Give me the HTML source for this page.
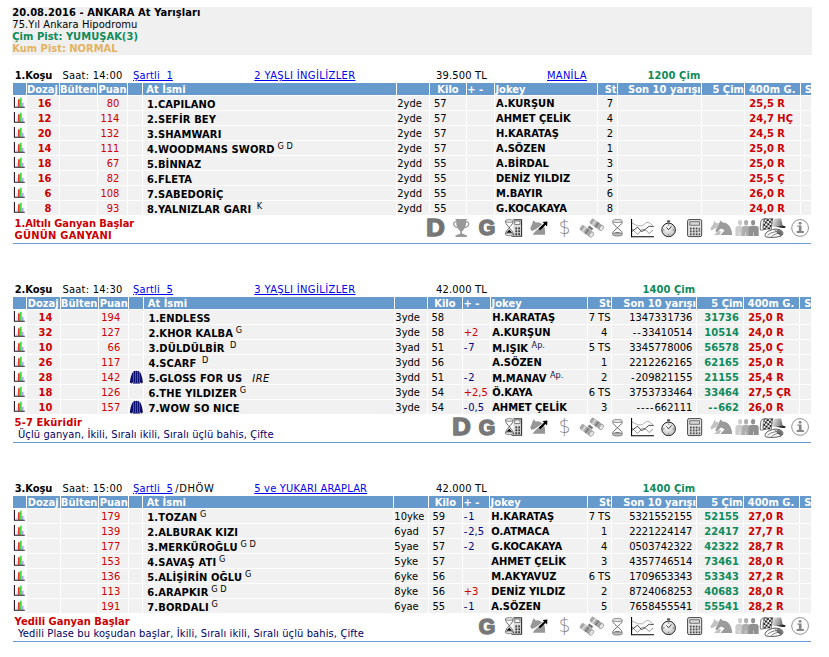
<!DOCTYPE html>
<html lang="tr"><head><meta charset="utf-8"><title>20.08.2016 - ANKARA At Yarışları</title>
<style>
html,body{margin:0;padding:0;background:#fff;overflow:hidden;width:829px;height:657px}
#page{position:absolute;left:0;top:0;width:829px;height:657px;
 font-family:"DejaVu Sans","Liberation Sans",sans-serif;font-size:9.95px;color:#000;overflow:hidden}
#hdr{position:absolute;left:12.1px;top:6.9px;width:799.9px;height:47.8px;background:#f0f0f0;line-height:11.95px;white-space:nowrap}
#hdr div{padding-left:0.2px}
.b{font-weight:bold !important}
.grn{color:#0f8a5a}
.org{color:#e3b45f}
.race{position:absolute;left:0;width:829px}
#mask{position:absolute;left:810.9px;top:60px;width:19px;height:597px;background:#fff}
.ttl{position:absolute;left:0;top:0.1px;height:12px;line-height:12px;white-space:nowrap}
.ttl span,.ttl a{position:absolute;top:0}
a{color:#0000ee;text-decoration:underline}
table.r{position:absolute;border-collapse:separate;border-spacing:0;table-layout:fixed}
table.r td,table.r th{padding:0;margin:0;white-space:nowrap;text-align:left;font-weight:normal;box-sizing:border-box;
 border-right:1.25px solid #fff;border-bottom:1.25px solid #fff}
table.r th{background:#6699cc;color:#fff;font-weight:bold;height:13.25px;line-height:11px;padding-top:1px;vertical-align:top}
table.r td{background:#f1f1f1;height:15px;line-height:11.75px;padding-top:2px;vertical-align:top}
table.r td.ic{background:#fafafa}
.cl{clip-path:inset(-40px 0 -40px 0);white-space:nowrap}
.hy{letter-spacing:0.9px}
.red{color:#cc0000}
.nav{color:#000080}
.ra{text-align:right !important}
.ca{text-align:center !important}
sup{font-size:8.2px;font-weight:normal;vertical-align:baseline;position:relative;top:-3.4px;line-height:0}
.ft{position:absolute;left:14.6px;white-space:nowrap;line-height:11.95px}
.ft .n{color:#000066;padding-left:3.4px}
.hr{position:absolute;left:13.1px;height:0.9px;width:797.8px;background:#6b9bd1}
.ico{position:absolute}
svg{display:block;overflow:visible}
</style></head>
<body><div id="page">
<svg width="0" height="0" style="position:absolute" aria-hidden="true"><defs><linearGradient id="dg" x1="0" y1="0" x2="1" y2="0"><stop offset="0" stop-color="#828282"/><stop offset="1" stop-color="#6c6c6c"/></linearGradient><radialGradient id="wg" cx="0.4" cy="0.35" r="0.75"><stop offset="0" stop-color="#fff"/><stop offset="1" stop-color="#b8b8b8"/></radialGradient><pattern id="ck" width="4.2" height="4.2" patternUnits="userSpaceOnUse" patternTransform="rotate(-8)"><rect width="4.2" height="4.2" fill="#fff"/><rect width="2.1" height="2.1" fill="#1a1a1a"/><rect x="2.1" y="2.1" width="2.1" height="2.1" fill="#1a1a1a"/></pattern><linearGradient id="ht" x1="0" y1="0" x2="1" y2="0.3"><stop offset="0" stop-color="#e2e2e2"/><stop offset="0.55" stop-color="#a0a0a0"/><stop offset="1" stop-color="#555"/></linearGradient></defs></svg>
<div id="hdr"><div class="b"><span style="letter-spacing:0.08px">20.08.2016 - ANKARA At Yarışları</span></div><div><span style="letter-spacing:0.07px">75.Yıl Ankara Hipodromu</span></div><div class="b grn"><span style="letter-spacing:0.03px">Çim Pist: YUMUŞAK(3)</span></div><div class="b org"><span style="letter-spacing:-0.02px">Kum Pist: NORMAL</span></div></div>
<div class="race" style="top:69.85px;height:178.2px"><div class="ttl"><span class="b" style="left:14.7px;letter-spacing:-0.08px">1.Koşu</span><span style="left:62.4px;letter-spacing:0.24px">Saat: 14:00</span><a style="left:133px;letter-spacing:0.15px">Şartli&nbsp; 1</a><a style="left:254.3px;letter-spacing:0.37px">2 YAŞLI İNGİLİZLER</a><span style="left:435.9px;letter-spacing:0.18px">39.500 TL</span><a style="left:547px;letter-spacing:0.26px">MANİLA</a><span class="b grn" style="left:647.6px;letter-spacing:0.07px">1200 Çim</span></div><table class="r" style="left:13.07px;top:13px;width:817.5px"><colgroup><col style="width:13.65px"><col style="width:33px"><col style="width:38.4px"><col style="width:30.15px"><col style="width:14.35px"><col style="width:254.15px"><col style="width:33.3px"><col style="width:36.9px"><col style="width:28.2px"><col style="width:103px"><col style="width:19.8px"><col style="width:84.1px"><col style="width:43.2px"><col style="width:55.7px"><col style="width:29.6px"></colgroup><tr><th style="padding-left:0.3px"></th><th style="padding-left:0.3px"><div class="cl">Dozaj</div></th><th style="padding-left:0.3px">Bülten</th><th style="padding-left:0.3px">Puan</th><th style="padding-left:0.3px"></th><th style="padding-left:0.3px">&nbsp;At İsmi</th><th style="padding-left:0.3px"></th><th class="ca">Kilo</th><th style="padding-left:0.3px">+ -</th><th style="padding-left:0.3px">Jokey</th><th class="ra" style="padding-right:0.3px"><div class="cl">St</div></th><th class="ra" style="padding-right:0.3px"><div class="cl">Son 10 yarışı</div></th><th class="ra" style="padding-right:0.3px"><div class="cl">5 Çim</div></th><th style="padding-left:0.3px">&nbsp;400m G.</th><th style="padding-left:0.3px">&nbsp;S</th></tr><tr><td class="ic" style="padding-top:0"><svg width="12.5" height="13.6" viewBox="0 0 12.5 13.6"><rect x="3.4" y="7.2" width="1.6" height="3.7" fill="#cfe2fb"/><rect x="5.0" y="3.3" width="1.8" height="7.6" fill="#ee3535"/><rect x="6.9" y="1.8" width="1.8" height="9.1" fill="#3bdc3b"/><rect x="8.8" y="6.9" width="1.7" height="4" fill="#a3a3f6"/><path d="M1.45 1.1V11.3H11.8" fill="none" stroke="#2a1822" stroke-width="1.1"/></svg></td><td class="b red ra" style="padding-right:7.2px">16</td><td></td><td class="red ra" style="padding-right:7.9px">80</td><td style="padding-top:0"></td><td class="b" style="padding-left:0.8px;padding-top:2.6px;line-height:11px;letter-spacing:0.12px">&nbsp;1.CAPILANO</td><td style="padding-left:0.5px">2yde</td><td style="padding-left:0.7px">&nbsp;57</td><td style="padding-left:0.6px"></td><td class="b" style="padding-left:0.9px">A.KURŞUN</td><td class="ra" style="padding-right:0.6px">7&nbsp;</td><td class="ra" style="padding-right:0.6px"></td><td class="b grn ra" style="padding-right:0.6px"></td><td class="b red" style="padding-left:0.7px">&nbsp;25,5 R</td><td></td></tr><tr><td class="ic" style="padding-top:0"><svg width="12.5" height="13.6" viewBox="0 0 12.5 13.6"><rect x="3.4" y="7.2" width="1.6" height="3.7" fill="#cfe2fb"/><rect x="5.0" y="3.3" width="1.8" height="7.6" fill="#ee3535"/><rect x="6.9" y="1.8" width="1.8" height="9.1" fill="#3bdc3b"/><rect x="8.8" y="6.9" width="1.7" height="4" fill="#a3a3f6"/><path d="M1.45 1.1V11.3H11.8" fill="none" stroke="#2a1822" stroke-width="1.1"/></svg></td><td class="b red ra" style="padding-right:7.2px">12</td><td></td><td class="red ra" style="padding-right:7.9px">114</td><td style="padding-top:0"></td><td class="b" style="padding-left:0.8px;padding-top:2.6px;line-height:11px;letter-spacing:0.12px">&nbsp;2.SEFİR BEY</td><td style="padding-left:0.5px">2yde</td><td style="padding-left:0.7px">&nbsp;57</td><td style="padding-left:0.6px"></td><td class="b" style="padding-left:0.9px">AHMET ÇELİK</td><td class="ra" style="padding-right:0.6px">4&nbsp;</td><td class="ra" style="padding-right:0.6px"></td><td class="b grn ra" style="padding-right:0.6px"></td><td class="b red" style="padding-left:0.7px">&nbsp;24,7 HÇ</td><td></td></tr><tr><td class="ic" style="padding-top:0"><svg width="12.5" height="13.6" viewBox="0 0 12.5 13.6"><rect x="3.4" y="7.2" width="1.6" height="3.7" fill="#cfe2fb"/><rect x="5.0" y="3.3" width="1.8" height="7.6" fill="#ee3535"/><rect x="6.9" y="1.8" width="1.8" height="9.1" fill="#3bdc3b"/><rect x="8.8" y="6.9" width="1.7" height="4" fill="#a3a3f6"/><path d="M1.45 1.1V11.3H11.8" fill="none" stroke="#2a1822" stroke-width="1.1"/></svg></td><td class="b red ra" style="padding-right:7.2px">20</td><td></td><td class="red ra" style="padding-right:7.9px">132</td><td style="padding-top:0"></td><td class="b" style="padding-left:0.8px;padding-top:2.6px;line-height:11px;letter-spacing:0.12px">&nbsp;3.SHAMWARI</td><td style="padding-left:0.5px">2yde</td><td style="padding-left:0.7px">&nbsp;57</td><td style="padding-left:0.6px"></td><td class="b" style="padding-left:0.9px">H.KARATAŞ</td><td class="ra" style="padding-right:0.6px">2&nbsp;</td><td class="ra" style="padding-right:0.6px"></td><td class="b grn ra" style="padding-right:0.6px"></td><td class="b red" style="padding-left:0.7px">&nbsp;24,5 R</td><td></td></tr><tr><td class="ic" style="padding-top:0"><svg width="12.5" height="13.6" viewBox="0 0 12.5 13.6"><rect x="3.4" y="7.2" width="1.6" height="3.7" fill="#cfe2fb"/><rect x="5.0" y="3.3" width="1.8" height="7.6" fill="#ee3535"/><rect x="6.9" y="1.8" width="1.8" height="9.1" fill="#3bdc3b"/><rect x="8.8" y="6.9" width="1.7" height="4" fill="#a3a3f6"/><path d="M1.45 1.1V11.3H11.8" fill="none" stroke="#2a1822" stroke-width="1.1"/></svg></td><td class="b red ra" style="padding-right:7.2px">14</td><td></td><td class="red ra" style="padding-right:7.9px">111</td><td style="padding-top:0"></td><td class="b" style="padding-left:0.8px;padding-top:2.6px;line-height:11px;letter-spacing:0.12px">&nbsp;4.WOODMANS SWORD<sup>&nbsp;G D</sup></td><td style="padding-left:0.5px">2yde</td><td style="padding-left:0.7px">&nbsp;57</td><td style="padding-left:0.6px"></td><td class="b" style="padding-left:0.9px">A.SÖZEN</td><td class="ra" style="padding-right:0.6px">1&nbsp;</td><td class="ra" style="padding-right:0.6px"></td><td class="b grn ra" style="padding-right:0.6px"></td><td class="b red" style="padding-left:0.7px">&nbsp;25,0 R</td><td></td></tr><tr><td class="ic" style="padding-top:0"><svg width="12.5" height="13.6" viewBox="0 0 12.5 13.6"><rect x="3.4" y="7.2" width="1.6" height="3.7" fill="#cfe2fb"/><rect x="5.0" y="3.3" width="1.8" height="7.6" fill="#ee3535"/><rect x="6.9" y="1.8" width="1.8" height="9.1" fill="#3bdc3b"/><rect x="8.8" y="6.9" width="1.7" height="4" fill="#a3a3f6"/><path d="M1.45 1.1V11.3H11.8" fill="none" stroke="#2a1822" stroke-width="1.1"/></svg></td><td class="b red ra" style="padding-right:7.2px">18</td><td></td><td class="red ra" style="padding-right:7.9px">67</td><td style="padding-top:0"></td><td class="b" style="padding-left:0.8px;padding-top:2.6px;line-height:11px;letter-spacing:0.12px">&nbsp;5.BİNNAZ</td><td style="padding-left:0.5px">2ydd</td><td style="padding-left:0.7px">&nbsp;55</td><td style="padding-left:0.6px"></td><td class="b" style="padding-left:0.9px">A.BİRDAL</td><td class="ra" style="padding-right:0.6px">3&nbsp;</td><td class="ra" style="padding-right:0.6px"></td><td class="b grn ra" style="padding-right:0.6px"></td><td class="b red" style="padding-left:0.7px">&nbsp;25,0 R</td><td></td></tr><tr><td class="ic" style="padding-top:0"><svg width="12.5" height="13.6" viewBox="0 0 12.5 13.6"><rect x="3.4" y="7.2" width="1.6" height="3.7" fill="#cfe2fb"/><rect x="5.0" y="3.3" width="1.8" height="7.6" fill="#ee3535"/><rect x="6.9" y="1.8" width="1.8" height="9.1" fill="#3bdc3b"/><rect x="8.8" y="6.9" width="1.7" height="4" fill="#a3a3f6"/><path d="M1.45 1.1V11.3H11.8" fill="none" stroke="#2a1822" stroke-width="1.1"/></svg></td><td class="b red ra" style="padding-right:7.2px">16</td><td></td><td class="red ra" style="padding-right:7.9px">82</td><td style="padding-top:0"></td><td class="b" style="padding-left:0.8px;padding-top:2.6px;line-height:11px;letter-spacing:0.12px">&nbsp;6.FLETA</td><td style="padding-left:0.5px">2ydd</td><td style="padding-left:0.7px">&nbsp;55</td><td style="padding-left:0.6px"></td><td class="b" style="padding-left:0.9px">DENİZ YILDIZ</td><td class="ra" style="padding-right:0.6px">5&nbsp;</td><td class="ra" style="padding-right:0.6px"></td><td class="b grn ra" style="padding-right:0.6px"></td><td class="b red" style="padding-left:0.7px">&nbsp;25,5 Ç</td><td></td></tr><tr><td class="ic" style="padding-top:0"><svg width="12.5" height="13.6" viewBox="0 0 12.5 13.6"><rect x="3.4" y="7.2" width="1.6" height="3.7" fill="#cfe2fb"/><rect x="5.0" y="3.3" width="1.8" height="7.6" fill="#ee3535"/><rect x="6.9" y="1.8" width="1.8" height="9.1" fill="#3bdc3b"/><rect x="8.8" y="6.9" width="1.7" height="4" fill="#a3a3f6"/><path d="M1.45 1.1V11.3H11.8" fill="none" stroke="#2a1822" stroke-width="1.1"/></svg></td><td class="b red ra" style="padding-right:7.2px">6</td><td></td><td class="red ra" style="padding-right:7.9px">108</td><td style="padding-top:0"></td><td class="b" style="padding-left:0.8px;padding-top:2.6px;line-height:11px;letter-spacing:0.12px">&nbsp;7.SABEDORİÇ</td><td style="padding-left:0.5px">2ydd</td><td style="padding-left:0.7px">&nbsp;55</td><td style="padding-left:0.6px"></td><td class="b" style="padding-left:0.9px">M.BAYIR</td><td class="ra" style="padding-right:0.6px">6&nbsp;</td><td class="ra" style="padding-right:0.6px"></td><td class="b grn ra" style="padding-right:0.6px"></td><td class="b red" style="padding-left:0.7px">&nbsp;26,0 R</td><td></td></tr><tr><td class="ic" style="padding-top:0"><svg width="12.5" height="13.6" viewBox="0 0 12.5 13.6"><rect x="3.4" y="7.2" width="1.6" height="3.7" fill="#cfe2fb"/><rect x="5.0" y="3.3" width="1.8" height="7.6" fill="#ee3535"/><rect x="6.9" y="1.8" width="1.8" height="9.1" fill="#3bdc3b"/><rect x="8.8" y="6.9" width="1.7" height="4" fill="#a3a3f6"/><path d="M1.45 1.1V11.3H11.8" fill="none" stroke="#2a1822" stroke-width="1.1"/></svg></td><td class="b red ra" style="padding-right:7.2px">8</td><td></td><td class="red ra" style="padding-right:7.9px">93</td><td style="padding-top:0"></td><td class="b" style="padding-left:0.8px;padding-top:2.6px;line-height:11px;letter-spacing:0.12px">&nbsp;8.YALNIZLAR GARI<sup>&nbsp;&nbsp;K</sup></td><td style="padding-left:0.5px">2ydd</td><td style="padding-left:0.7px">&nbsp;55</td><td style="padding-left:0.6px"></td><td class="b" style="padding-left:0.9px">G.KOCAKAYA</td><td class="ra" style="padding-right:0.6px">8&nbsp;</td><td class="ra" style="padding-right:0.6px"></td><td class="b grn ra" style="padding-right:0.6px"></td><td class="b red" style="padding-left:0.7px">&nbsp;24,0 R</td><td></td></tr></table><div class="ft b red" style="top:148.25px"><span style="letter-spacing:-0.07px">1.Altılı Ganyan Başlar</span></div><div class="ft b red" style="top:160.2px"><span style="letter-spacing:0.22px">GÜNÜN GANYANI</span></div><div class="ico" style="left:427px;top:149.35px"><svg width="18" height="18" viewBox="0 0 18 18"><text transform="translate(-0.65 17.2) scale(1.11 1)" x="0" y="0" font-family="Liberation Sans, sans-serif" font-weight="bold" font-size="23.1" fill="url(#dg)" stroke="#777" stroke-width="1.5" stroke-linejoin="round">D</text></svg></div><div class="ico" style="left:452.9px;top:149.35px"><svg width="16.4" height="18" viewBox="0 0 16.4 18"><path d="M2.4 0H14V1.1H13.3C13.3 4 13 6 12.4 7.4C11.6 9.4 10.4 10.8 9 12.6V14.6L11.6 15.6L13.9 16.6V18H2.5V16.6L4.8 15.6L7.4 14.6V12.6C6 10.8 4.8 9.4 4 7.4C3.4 6 3.1 4 3.1 1.1H2.4Z" fill="#999"/><path d="M3.3 2.9C0.4 2.4 0 5.2 1.3 6.8C2.1 7.8 3.4 8.4 4.8 8.6M13.1 2.9C16 2.4 16.4 5.2 15.1 6.8C14.3 7.8 13 8.4 11.6 8.6" fill="none" stroke="#999" stroke-width="1.3"/></svg></div><div class="ico" style="left:478.5px;top:149.65px"><svg width="16.2" height="16.8" viewBox="0 0 16.2 16.8"><text x="-0.35" y="15.85" font-family="Liberation Sans, sans-serif" font-weight="bold" font-size="21.2" fill="#787878" stroke="#787878" stroke-width="1.6" stroke-linejoin="round" stroke-linecap="round">G</text></svg></div><div class="ico" style="left:504.8px;top:149.15px"><svg width="17.2" height="18" viewBox="0 0 17.2 18"><rect x="8.4" y="0.6" width="8.2" height="16.6" fill="#dcdcdc"/><path d="M8.4 0.7H16.6V17.2H6.5" fill="none" stroke="#333" stroke-width="1.1"/><rect x="9.8" y="2" width="5.2" height="3.6" fill="#f2f2f2" stroke="#555" stroke-width="0.7"/><g fill="#3a3a3a"><rect x="10.4" y="8.4" width="1.8" height="2"/><rect x="13.3" y="8.4" width="1.8" height="2"/><rect x="10.4" y="11.3" width="1.8" height="2"/><rect x="13.3" y="11.3" width="1.8" height="2"/><rect x="10.4" y="14.2" width="1.8" height="2"/><rect x="13.3" y="14.2" width="1.8" height="2"/><rect x="7.8" y="14.8" width="1.4" height="1.4"/></g><path d="M0.5 2C0.5 5.5 3.4 7 4.3 8.7C5.2 7 8.1 5.5 8.1 2ZM0.5 15.2C0.5 12 3.4 10.4 4.3 8.7C5.2 10.4 8.1 12 8.1 15.2Z" fill="#fff" stroke="#444" stroke-width="0.8"/><ellipse cx="4.3" cy="2" rx="3.9" ry="1.4" fill="#e8e8e8" stroke="#666" stroke-width="0.7"/><ellipse cx="4.3" cy="15.3" rx="3.9" ry="1.4" fill="#ddd" stroke="#666" stroke-width="0.7"/><path d="M1.4 13.7L4.3 10.5L7.2 13.7Z" fill="#111"/></svg></div><div class="ico" style="left:529.9px;top:150.35px"><svg width="17.4" height="14.8" viewBox="0 0 17.4 14.8"><path d="M3.4 0.2L5.8 2.6L8.6 2.2L12.4 4.2L9.6 6.5L5 9.7L1.7 11L0.2 8.6L1.9 4.4Z" fill="#979797"/><path d="M12.9 4.9L14.6 7.6C15 10 15.2 12.4 15.1 14.8H2.8L3.6 13.2L6.2 10.4L10.2 7.3Z" fill="#979797"/><path d="M9.4 9.4L15.8 3.2" stroke="#000" stroke-width="2.1" fill="none"/><path d="M12.6 1.9L17.4 1.6L17.1 6.6Z" fill="#000"/></svg></div><div class="ico" style="left:559.8px;top:150.35px"><svg width="9.2" height="17" viewBox="0 0 9.2 17"><text x="-1.5" y="14.3" font-family="DejaVu Sans Light, DejaVu Sans, sans-serif" font-weight="200" font-size="18.8" fill="#8c8c8c">$</text></svg></div><div class="ico" style="left:579.8px;top:149.15px"><svg width="23.2" height="18.4" viewBox="0 0 23.2 18.4"><g transform="rotate(36 6.6 12.1)"><rect x="-0.6" y="9.1" width="14.4" height="6" rx="1.6" fill="#a6a6a6"/><rect x="2.4" y="9.1" width="2.2" height="6" fill="#d4d4d4"/><rect x="6.4" y="9.1" width="1.6" height="6" fill="#7a7a7a"/><ellipse cx="12.6" cy="12.1" rx="1.9" ry="2.9" fill="#e4e4e4" stroke="#8a8a8a" stroke-width="0.6"/></g><g transform="rotate(36 16.6 5.6)"><rect x="9.4" y="2.7" width="14.4" height="5.8" rx="1.6" fill="#a6a6a6"/><rect x="12.4" y="2.7" width="2.2" height="5.8" fill="#d4d4d4"/><rect x="16.4" y="2.7" width="1.6" height="5.8" fill="#7a7a7a"/><ellipse cx="22.6" cy="5.6" rx="1.9" ry="2.8" fill="#e4e4e4" stroke="#8a8a8a" stroke-width="0.6"/></g><path d="M8.5 7.5L12.5 10.5" stroke="#777" stroke-width="2.6"/></svg></div><div class="ico" style="left:612.2px;top:149.65px"><svg width="10.9" height="17.4" viewBox="0 0 10.9 17.4"><path d="M0.6 2.2C0.6 6 4.5 7 5.45 8.7C6.4 7 10.3 6 10.3 2.2M0.6 15.2C0.6 11.4 4.5 10.4 5.45 8.7C6.4 10.4 10.3 11.4 10.3 15.2" fill="#fff" stroke="#4a4a4a" stroke-width="0.8"/><ellipse cx="5.45" cy="2" rx="4.9" ry="1.6" fill="#e6e6e6" stroke="#777" stroke-width="0.8"/><path d="M2 14.4C3.5 12.6 7.4 12.6 8.9 14.4Z" fill="#777"/><ellipse cx="5.45" cy="15.5" rx="4.9" ry="1.6" fill="#bdbdbd" stroke="#777" stroke-width="0.8"/></svg></div><div class="ico" style="left:631.2px;top:149.15px"><svg width="23" height="18.2" viewBox="0 0 23 18.2"><path d="M0.8 3.9L6.6 6.8L11.4 6.8L15.7 3.4L18.6 3.9L23 7.7" fill="none" stroke="#9a9a9a" stroke-width="0.8"/><path d="M0.8 9.7L6.6 15.4L11.4 10.1L15.3 11.6L18.1 14.5L22 11.1" fill="none" stroke="#777" stroke-width="0.8"/><path d="M0.8 12.5L6.6 8.2L10.4 12.5L12.8 11.6L18.1 7.2L22.5 7.7" fill="none" stroke="#222" stroke-width="0.8"/><path d="M0.55 0V17.7H23" fill="none" stroke="#000" stroke-width="1.1"/></svg></div><div class="ico" style="left:661px;top:150.15px"><svg width="15.2" height="17.2" viewBox="0 0 15.2 17.2"><rect x="6" y="0.2" width="3.2" height="2.4" rx="0.8" fill="#555"/><circle cx="7.6" cy="9.9" r="6.8" fill="url(#wg)" stroke="#222" stroke-width="1"/><path d="M7.6 4.4V5.8M7.6 14V15.4M2.1 9.9H3.5M11.7 9.9H13.1" stroke="#555" stroke-width="0.7"/><path d="M5.4 7.3L7.6 9.9L10.4 6.4" fill="none" stroke="#333" stroke-width="0.9"/></svg></div><div class="ico" style="left:687px;top:149.15px"><svg width="15.3" height="18.2" viewBox="0 0 15.3 18.2"><rect x="0.6" y="0.6" width="14.1" height="17" rx="1.6" fill="#e6e6e6" stroke="#444" stroke-width="1"/><rect x="2.8" y="2.8" width="9.8" height="3.4" fill="#dadada" stroke="#555" stroke-width="0.8"/><g fill="#4a4a4a"><rect x="2.9" y="8.6" width="1.8" height="1.9"/><rect x="5.8" y="8.6" width="1.8" height="1.9"/><rect x="8.7" y="8.6" width="1.8" height="1.9"/><rect x="2.9" y="11.5" width="1.8" height="1.9"/><rect x="5.8" y="11.5" width="1.8" height="1.9"/><rect x="8.7" y="11.5" width="1.8" height="1.9"/><rect x="2.9" y="14.4" width="1.8" height="1.9"/><rect x="5.8" y="14.4" width="1.8" height="1.9"/><rect x="8.7" y="14.4" width="1.8" height="1.9"/><rect x="11.6" y="14.4" width="1.6" height="1.9"/></g><rect x="11.6" y="8.6" width="1.6" height="4.6" fill="#777"/></svg></div><div class="ico" style="left:710px;top:150.15px"><svg width="22.2" height="15" viewBox="0 0 22.2 15"><path d="M10.4 0.4L12.6 2.6C17.2 2.4 22 7 22.2 15H10.5L14.6 10.2L11 8.4L6.6 12.4L5.3 11L8.6 4.4Z" fill="#9b9b9b"/><path d="M4.3 0.8L6 3L8.9 3.2L6.9 7.6L1.6 10.4L0.2 8.7L3 4.5Z" fill="#c2c2c2"/><path d="M3.9 15L8.6 10.8L11.2 11.6L9.6 15Z" fill="#c2c2c2"/></svg></div><div class="ico" style="left:735.4px;top:150.15px"><svg width="23.8" height="16.2" viewBox="0 0 23.8 16.2"><ellipse cx="5.1" cy="2.7" rx="2.1" ry="2.7" fill="#cdcdcd"/><path d="M0.4 16V8.8Q0.4 5.9 3 5.9H5.4Q8 5.9 8 8.8V16H4.45V12.5H3.95V16Z" fill="#cdcdcd"/><ellipse cx="11.1" cy="2.7" rx="2.1" ry="2.7" fill="#adadad"/><path d="M6.8 16V8.8Q6.8 5.9 9.4 5.9H12.2Q14.8 5.9 14.8 8.8V16H11.05V12.5H10.55V16Z" fill="#adadad"/><ellipse cx="18.1" cy="2.7" rx="2.1" ry="2.7" fill="#909090"/><path d="M13.4 16V8.8Q13.4 5.9 16 5.9H21.1Q23.7 5.9 23.7 8.8V16H18.8V12.5H18.3V16Z" fill="#909090"/></svg></div><div class="ico" style="left:760.2px;top:148.65px"><svg width="25.8" height="19.3" viewBox="0 0 25.8 19.3"><path d="M1.4 2.2C2.6 0.6 5 0.4 7 0.8C9 1.2 11 0.6 12.8 0.4L11.4 11C9.6 11.4 7.6 10.8 5.8 11.2C4.2 11.5 2.4 12.4 0.4 11.8C0.2 8 0.6 4.6 1.4 2.2Z" fill="url(#ck)" stroke="#444" stroke-width="0.6"/><path d="M1.4 2.2C2.2 1.2 3.4 1.4 3.8 2.4C3 5.4 2.8 8.6 3 11.4C2 12.2 0.8 12.2 0.4 11.8C0.2 8 0.6 4.6 1.4 2.2Z" fill="#fff" stroke="#555" stroke-width="0.6"/><path d="M13 8.6C13 5 13.4 2 14 0.7L21 0.4C21.8 2.6 22.3 5.2 22.5 7.6L25.6 8.6C25.4 9.6 24.6 10 23.6 10C20 9.4 16.5 9.2 13 8.6Z" fill="url(#ht)"/><path d="M16 8.3C19 8.7 22 8.5 22.5 7.6L25.7 8.7C25.3 9.8 24.5 10.1 23.6 10C21 9.6 18.4 9.3 16 8.3Z" fill="#2a2a2a"/><path d="M5.2 16.4C6 13.8 9.5 12.4 12.5 11.6C15 10.6 19.6 11 22 13.2C23.4 14.8 23.2 17 21 18C17 19.6 8.6 19.8 5.8 18.8C5 18.4 4.9 17.2 5.2 16.4Z" fill="#fff" stroke="#2a2a2a" stroke-width="0.8"/><path d="M16.6 11.6C19.6 11.4 21.8 12.8 22.5 14.6C22.9 16.4 22 17.8 20.4 18.3L16.8 14.6Z" fill="#777"/><path d="M7.6 17.4C10 14.8 13.6 14 16.4 13.6M11.4 18.6C14 16.2 17.4 15.2 20.6 15.2M14.4 11.8L17.6 14.6" fill="none" stroke="#444" stroke-width="0.7"/></svg></div><div class="ico" style="left:791px;top:149.15px"><svg width="18.2" height="17.9" viewBox="0 0 18.2 17.9"><circle cx="9.1" cy="8.95" r="8.4" fill="#fcfcfc" stroke="#868686" stroke-width="0.9"/><circle cx="9.1" cy="4.35" r="1.45" fill="#858585"/><path d="M6.4 6.4H10.5V12.1H12.9V13.9H5.7V12.1H7.9V7.8H6.4Z" fill="#858585"/></svg></div><div class="hr" style="top:172.8px"></div></div>
<div class="race" style="top:283.9px;height:163.2px"><div class="ttl"><span class="b" style="left:14.7px;letter-spacing:-0.08px">2.Koşu</span><span style="left:62.4px;letter-spacing:0.24px">Saat: 14:30</span><a style="left:133px;letter-spacing:0.15px">Şartli&nbsp; 5</a><a style="left:254.3px;letter-spacing:0.37px">3 YAŞLI İNGİLİZLER</a><span style="left:435.9px;letter-spacing:0.18px">42.000 TL</span><span class="b grn" style="left:642.5px;letter-spacing:0.07px">1400 Çim</span></div><table class="r" style="left:13.17px;top:13px;width:817.4px"><colgroup><col style="width:14.2px"><col style="width:33.2px"><col style="width:38.8px"><col style="width:29.8px"><col style="width:14.9px"><col style="width:250.8px"><col style="width:32.8px"><col style="width:35.5px"><col style="width:28.15px"><col style="width:96.75px"><col style="width:24.1px"><col style="width:85.1px"><col style="width:46.8px"><col style="width:56.4px"><col style="width:30.1px"></colgroup><tr><th style="padding-left:0.3px"></th><th style="padding-left:0.3px"><div class="cl">Dozaj</div></th><th style="padding-left:0.3px">Bülten</th><th style="padding-left:0.3px">Puan</th><th style="padding-left:0.3px"></th><th style="padding-left:0.3px">&nbsp;At İsmi</th><th style="padding-left:0.3px"></th><th class="ca">Kilo</th><th style="padding-left:0.3px">+ -</th><th style="padding-left:0.3px">Jokey</th><th class="ra" style="padding-right:0.3px"><div class="cl">St</div></th><th class="ra" style="padding-right:0.3px"><div class="cl">Son 10 yarışı</div></th><th class="ra" style="padding-right:0.3px"><div class="cl">5 Çim</div></th><th style="padding-left:0.3px">&nbsp;400m G.</th><th style="padding-left:0.3px">&nbsp;S</th></tr><tr><td class="ic" style="padding-top:0"><svg width="12.5" height="13.6" viewBox="0 0 12.5 13.6"><rect x="3.4" y="7.2" width="1.6" height="3.7" fill="#cfe2fb"/><rect x="5.0" y="3.3" width="1.8" height="7.6" fill="#ee3535"/><rect x="6.9" y="1.8" width="1.8" height="9.1" fill="#3bdc3b"/><rect x="8.8" y="6.9" width="1.7" height="4" fill="#a3a3f6"/><path d="M1.45 1.1V11.3H11.8" fill="none" stroke="#2a1822" stroke-width="1.1"/></svg></td><td class="b red ra" style="padding-right:7.2px">14</td><td></td><td class="red ra" style="padding-right:7.9px">194</td><td style="padding-top:0"></td><td class="b" style="padding-left:0.8px;padding-top:2.6px;line-height:11px;letter-spacing:0.12px">&nbsp;1.ENDLESS</td><td style="padding-left:0.5px">3yde</td><td style="padding-left:0.7px">&nbsp;58</td><td style="padding-left:0.6px"></td><td class="b" style="padding-left:0.9px">H.KARATAŞ</td><td class="ra" style="padding-right:0.6px">7 TS</td><td class="ra" style="padding-right:0.6px">1347331736&nbsp;</td><td class="b grn ra" style="padding-right:0.6px">31736&nbsp;</td><td class="b red" style="padding-left:0.7px">&nbsp;25,0 R</td><td></td></tr><tr><td class="ic" style="padding-top:0"><svg width="12.5" height="13.6" viewBox="0 0 12.5 13.6"><rect x="3.4" y="7.2" width="1.6" height="3.7" fill="#cfe2fb"/><rect x="5.0" y="3.3" width="1.8" height="7.6" fill="#ee3535"/><rect x="6.9" y="1.8" width="1.8" height="9.1" fill="#3bdc3b"/><rect x="8.8" y="6.9" width="1.7" height="4" fill="#a3a3f6"/><path d="M1.45 1.1V11.3H11.8" fill="none" stroke="#2a1822" stroke-width="1.1"/></svg></td><td class="b red ra" style="padding-right:7.2px">32</td><td></td><td class="red ra" style="padding-right:7.9px">127</td><td style="padding-top:0"></td><td class="b" style="padding-left:0.8px;padding-top:2.6px;line-height:11px;letter-spacing:0.12px">&nbsp;2.KHOR KALBA<sup>&nbsp;G</sup></td><td style="padding-left:0.5px">3yde</td><td style="padding-left:0.7px">&nbsp;58</td><td class="red" style="padding-left:0.6px">+2</td><td class="b" style="padding-left:0.9px">A.KURŞUN</td><td class="ra" style="padding-right:0.6px">4&nbsp;</td><td class="ra" style="padding-right:0.6px"><span class="hy">-</span><span class="hy">-</span>33410514&nbsp;</td><td class="b grn ra" style="padding-right:0.6px">10514&nbsp;</td><td class="b red" style="padding-left:0.7px">&nbsp;24,0 R</td><td></td></tr><tr><td class="ic" style="padding-top:0"><svg width="12.5" height="13.6" viewBox="0 0 12.5 13.6"><rect x="3.4" y="7.2" width="1.6" height="3.7" fill="#cfe2fb"/><rect x="5.0" y="3.3" width="1.8" height="7.6" fill="#ee3535"/><rect x="6.9" y="1.8" width="1.8" height="9.1" fill="#3bdc3b"/><rect x="8.8" y="6.9" width="1.7" height="4" fill="#a3a3f6"/><path d="M1.45 1.1V11.3H11.8" fill="none" stroke="#2a1822" stroke-width="1.1"/></svg></td><td class="b red ra" style="padding-right:7.2px">10</td><td></td><td class="red ra" style="padding-right:7.9px">66</td><td style="padding-top:0"></td><td class="b" style="padding-left:0.8px;padding-top:2.6px;line-height:11px;letter-spacing:0.12px">&nbsp;3.DÜLDÜLBİR<sup>&nbsp;&nbsp;D</sup></td><td style="padding-left:0.5px">3yad</td><td style="padding-left:0.7px">&nbsp;51</td><td class="nav" style="padding-left:0.6px"><span class="hy">-</span>7</td><td class="b" style="padding-left:0.9px;padding-top:2.6px;line-height:11px">M.IŞIK <sup style="color:#14144e">Ap.</sup></td><td class="ra" style="padding-right:0.6px">5 TS</td><td class="ra" style="padding-right:0.6px">3345778006&nbsp;</td><td class="b grn ra" style="padding-right:0.6px">56578&nbsp;</td><td class="b red" style="padding-left:0.7px">&nbsp;25,0 Ç</td><td></td></tr><tr><td class="ic" style="padding-top:0"><svg width="12.5" height="13.6" viewBox="0 0 12.5 13.6"><rect x="3.4" y="7.2" width="1.6" height="3.7" fill="#cfe2fb"/><rect x="5.0" y="3.3" width="1.8" height="7.6" fill="#ee3535"/><rect x="6.9" y="1.8" width="1.8" height="9.1" fill="#3bdc3b"/><rect x="8.8" y="6.9" width="1.7" height="4" fill="#a3a3f6"/><path d="M1.45 1.1V11.3H11.8" fill="none" stroke="#2a1822" stroke-width="1.1"/></svg></td><td class="b red ra" style="padding-right:7.2px">26</td><td></td><td class="red ra" style="padding-right:7.9px">117</td><td style="padding-top:0"></td><td class="b" style="padding-left:0.8px;padding-top:2.6px;line-height:11px;letter-spacing:0.12px">&nbsp;4.SCARF<sup>&nbsp;&nbsp;D</sup></td><td style="padding-left:0.5px">3ydd</td><td style="padding-left:0.7px">&nbsp;56</td><td style="padding-left:0.6px"></td><td class="b" style="padding-left:0.9px">A.SÖZEN</td><td class="ra" style="padding-right:0.6px">1&nbsp;</td><td class="ra" style="padding-right:0.6px">2212262165&nbsp;</td><td class="b grn ra" style="padding-right:0.6px">62165&nbsp;</td><td class="b red" style="padding-left:0.7px">&nbsp;25,0 R</td><td></td></tr><tr><td class="ic" style="padding-top:0"><svg width="12.5" height="13.6" viewBox="0 0 12.5 13.6"><rect x="3.4" y="7.2" width="1.6" height="3.7" fill="#cfe2fb"/><rect x="5.0" y="3.3" width="1.8" height="7.6" fill="#ee3535"/><rect x="6.9" y="1.8" width="1.8" height="9.1" fill="#3bdc3b"/><rect x="8.8" y="6.9" width="1.7" height="4" fill="#a3a3f6"/><path d="M1.45 1.1V11.3H11.8" fill="none" stroke="#2a1822" stroke-width="1.1"/></svg></td><td class="b red ra" style="padding-right:7.2px">28</td><td></td><td class="red ra" style="padding-right:7.9px">142</td><td style="padding-top:0"><svg width="13.9" height="13.6" viewBox="0 0 13.9 13.6"><path d="M5.4 0.8L6.3 1.3L7.25 0.8L8.2 1.3L9.1 0.8L11.6 2.9C12.6 5 13.6 9 13.9 12.6L12.3 13.4L11.05 12V13.6H3.8V12L2.6 13.4L0.9 12.6C1.2 9 2.2 5 3.2 2.9Z" fill="#0b0b6b"/><g fill="#1f6fe6"><rect x="3.95" y="2.2" width="0.95" height="11.4"/><rect x="5.95" y="1.4" width="0.95" height="12.2"/><rect x="7.95" y="1.4" width="0.95" height="12.2"/><rect x="9.95" y="2.2" width="0.95" height="11.4"/></g></svg></td><td class="b" style="padding-left:0.8px;padding-top:2.6px;line-height:11px;letter-spacing:0.12px">&nbsp;5.GLOSS FOR US<i style="font-weight:normal;padding-left:10px;letter-spacing:0.5px">IRE</i></td><td style="padding-left:0.5px">3ydd</td><td style="padding-left:0.7px">&nbsp;51</td><td class="nav" style="padding-left:0.6px"><span class="hy">-</span>2</td><td class="b" style="padding-left:0.9px;padding-top:2.6px;line-height:11px">M.MANAV <sup style="color:#14144e">Ap.</sup></td><td class="ra" style="padding-right:0.6px">2&nbsp;</td><td class="ra" style="padding-right:0.6px"><span class="hy">-</span>209821155&nbsp;</td><td class="b grn ra" style="padding-right:0.6px">21155&nbsp;</td><td class="b red" style="padding-left:0.7px">&nbsp;25,4 R</td><td></td></tr><tr><td class="ic" style="padding-top:0"><svg width="12.5" height="13.6" viewBox="0 0 12.5 13.6"><rect x="3.4" y="7.2" width="1.6" height="3.7" fill="#cfe2fb"/><rect x="5.0" y="3.3" width="1.8" height="7.6" fill="#ee3535"/><rect x="6.9" y="1.8" width="1.8" height="9.1" fill="#3bdc3b"/><rect x="8.8" y="6.9" width="1.7" height="4" fill="#a3a3f6"/><path d="M1.45 1.1V11.3H11.8" fill="none" stroke="#2a1822" stroke-width="1.1"/></svg></td><td class="b red ra" style="padding-right:7.2px">18</td><td></td><td class="red ra" style="padding-right:7.9px">126</td><td style="padding-top:0"></td><td class="b" style="padding-left:0.8px;padding-top:2.6px;line-height:11px;letter-spacing:0.12px">&nbsp;6.THE YILDIZER<sup>&nbsp;G</sup></td><td style="padding-left:0.5px">3yde</td><td style="padding-left:0.7px">&nbsp;54</td><td class="red" style="padding-left:0.6px">+2,5</td><td class="b" style="padding-left:0.9px">Ö.KAYA</td><td class="ra" style="padding-right:0.6px">6 TS</td><td class="ra" style="padding-right:0.6px">3753733464&nbsp;</td><td class="b grn ra" style="padding-right:0.6px">33464&nbsp;</td><td class="b red" style="padding-left:0.7px">&nbsp;27,5 ÇR</td><td></td></tr><tr><td class="ic" style="padding-top:0"><svg width="12.5" height="13.6" viewBox="0 0 12.5 13.6"><rect x="3.4" y="7.2" width="1.6" height="3.7" fill="#cfe2fb"/><rect x="5.0" y="3.3" width="1.8" height="7.6" fill="#ee3535"/><rect x="6.9" y="1.8" width="1.8" height="9.1" fill="#3bdc3b"/><rect x="8.8" y="6.9" width="1.7" height="4" fill="#a3a3f6"/><path d="M1.45 1.1V11.3H11.8" fill="none" stroke="#2a1822" stroke-width="1.1"/></svg></td><td class="b red ra" style="padding-right:7.2px">10</td><td></td><td class="red ra" style="padding-right:7.9px">157</td><td style="padding-top:0"><svg width="13.9" height="13.6" viewBox="0 0 13.9 13.6"><path d="M5.4 0.8L6.3 1.3L7.25 0.8L8.2 1.3L9.1 0.8L11.6 2.9C12.6 5 13.6 9 13.9 12.6L12.3 13.4L11.05 12V13.6H3.8V12L2.6 13.4L0.9 12.6C1.2 9 2.2 5 3.2 2.9Z" fill="#0b0b6b"/><g fill="#1f6fe6"><rect x="3.95" y="2.2" width="0.95" height="11.4"/><rect x="5.95" y="1.4" width="0.95" height="12.2"/><rect x="7.95" y="1.4" width="0.95" height="12.2"/><rect x="9.95" y="2.2" width="0.95" height="11.4"/></g></svg></td><td class="b" style="padding-left:0.8px;padding-top:2.6px;line-height:11px;letter-spacing:0.12px">&nbsp;7.WOW SO NICE</td><td style="padding-left:0.5px">3yde</td><td style="padding-left:0.7px">&nbsp;54</td><td class="nav" style="padding-left:0.6px"><span class="hy">-</span>0,5</td><td class="b" style="padding-left:0.9px">AHMET ÇELİK</td><td class="ra" style="padding-right:0.6px">3&nbsp;</td><td class="ra" style="padding-right:0.6px"><span class="hy">-</span><span class="hy">-</span><span class="hy">-</span><span class="hy">-</span>662111&nbsp;</td><td class="b grn ra" style="padding-right:0.6px"><span class="hy">-</span><span class="hy">-</span>662&nbsp;</td><td class="b red" style="padding-left:0.7px">&nbsp;26,0 R</td><td></td></tr></table><div class="ft b red" style="top:133.25px"><span style="letter-spacing:0.15px">5-7 Eküridir</span></div><div class="ft" style="top:145.2px"><span class="n"><span style="letter-spacing:0.09px">Üçlü ganyan, İkili, Sıralı ikili, Sıralı üçlü bahis, Çifte</span></span></div><div class="ico" style="left:453px;top:134.35px"><svg width="18" height="18" viewBox="0 0 18 18"><text transform="translate(-0.65 17.2) scale(1.11 1)" x="0" y="0" font-family="Liberation Sans, sans-serif" font-weight="bold" font-size="23.1" fill="url(#dg)" stroke="#777" stroke-width="1.5" stroke-linejoin="round">D</text></svg></div><div class="ico" style="left:478.5px;top:134.65px"><svg width="16.2" height="16.8" viewBox="0 0 16.2 16.8"><text x="-0.35" y="15.85" font-family="Liberation Sans, sans-serif" font-weight="bold" font-size="21.2" fill="#787878" stroke="#787878" stroke-width="1.6" stroke-linejoin="round" stroke-linecap="round">G</text></svg></div><div class="ico" style="left:504.8px;top:134.15px"><svg width="17.2" height="18" viewBox="0 0 17.2 18"><rect x="8.4" y="0.6" width="8.2" height="16.6" fill="#dcdcdc"/><path d="M8.4 0.7H16.6V17.2H6.5" fill="none" stroke="#333" stroke-width="1.1"/><rect x="9.8" y="2" width="5.2" height="3.6" fill="#f2f2f2" stroke="#555" stroke-width="0.7"/><g fill="#3a3a3a"><rect x="10.4" y="8.4" width="1.8" height="2"/><rect x="13.3" y="8.4" width="1.8" height="2"/><rect x="10.4" y="11.3" width="1.8" height="2"/><rect x="13.3" y="11.3" width="1.8" height="2"/><rect x="10.4" y="14.2" width="1.8" height="2"/><rect x="13.3" y="14.2" width="1.8" height="2"/><rect x="7.8" y="14.8" width="1.4" height="1.4"/></g><path d="M0.5 2C0.5 5.5 3.4 7 4.3 8.7C5.2 7 8.1 5.5 8.1 2ZM0.5 15.2C0.5 12 3.4 10.4 4.3 8.7C5.2 10.4 8.1 12 8.1 15.2Z" fill="#fff" stroke="#444" stroke-width="0.8"/><ellipse cx="4.3" cy="2" rx="3.9" ry="1.4" fill="#e8e8e8" stroke="#666" stroke-width="0.7"/><ellipse cx="4.3" cy="15.3" rx="3.9" ry="1.4" fill="#ddd" stroke="#666" stroke-width="0.7"/><path d="M1.4 13.7L4.3 10.5L7.2 13.7Z" fill="#111"/></svg></div><div class="ico" style="left:529.9px;top:135.35px"><svg width="17.4" height="14.8" viewBox="0 0 17.4 14.8"><path d="M3.4 0.2L5.8 2.6L8.6 2.2L12.4 4.2L9.6 6.5L5 9.7L1.7 11L0.2 8.6L1.9 4.4Z" fill="#979797"/><path d="M12.9 4.9L14.6 7.6C15 10 15.2 12.4 15.1 14.8H2.8L3.6 13.2L6.2 10.4L10.2 7.3Z" fill="#979797"/><path d="M9.4 9.4L15.8 3.2" stroke="#000" stroke-width="2.1" fill="none"/><path d="M12.6 1.9L17.4 1.6L17.1 6.6Z" fill="#000"/></svg></div><div class="ico" style="left:559.8px;top:135.35px"><svg width="9.2" height="17" viewBox="0 0 9.2 17"><text x="-1.5" y="14.3" font-family="DejaVu Sans Light, DejaVu Sans, sans-serif" font-weight="200" font-size="18.8" fill="#8c8c8c">$</text></svg></div><div class="ico" style="left:579.8px;top:134.15px"><svg width="23.2" height="18.4" viewBox="0 0 23.2 18.4"><g transform="rotate(36 6.6 12.1)"><rect x="-0.6" y="9.1" width="14.4" height="6" rx="1.6" fill="#a6a6a6"/><rect x="2.4" y="9.1" width="2.2" height="6" fill="#d4d4d4"/><rect x="6.4" y="9.1" width="1.6" height="6" fill="#7a7a7a"/><ellipse cx="12.6" cy="12.1" rx="1.9" ry="2.9" fill="#e4e4e4" stroke="#8a8a8a" stroke-width="0.6"/></g><g transform="rotate(36 16.6 5.6)"><rect x="9.4" y="2.7" width="14.4" height="5.8" rx="1.6" fill="#a6a6a6"/><rect x="12.4" y="2.7" width="2.2" height="5.8" fill="#d4d4d4"/><rect x="16.4" y="2.7" width="1.6" height="5.8" fill="#7a7a7a"/><ellipse cx="22.6" cy="5.6" rx="1.9" ry="2.8" fill="#e4e4e4" stroke="#8a8a8a" stroke-width="0.6"/></g><path d="M8.5 7.5L12.5 10.5" stroke="#777" stroke-width="2.6"/></svg></div><div class="ico" style="left:612.2px;top:134.65px"><svg width="10.9" height="17.4" viewBox="0 0 10.9 17.4"><path d="M0.6 2.2C0.6 6 4.5 7 5.45 8.7C6.4 7 10.3 6 10.3 2.2M0.6 15.2C0.6 11.4 4.5 10.4 5.45 8.7C6.4 10.4 10.3 11.4 10.3 15.2" fill="#fff" stroke="#4a4a4a" stroke-width="0.8"/><ellipse cx="5.45" cy="2" rx="4.9" ry="1.6" fill="#e6e6e6" stroke="#777" stroke-width="0.8"/><path d="M2 14.4C3.5 12.6 7.4 12.6 8.9 14.4Z" fill="#777"/><ellipse cx="5.45" cy="15.5" rx="4.9" ry="1.6" fill="#bdbdbd" stroke="#777" stroke-width="0.8"/></svg></div><div class="ico" style="left:631.2px;top:134.15px"><svg width="23" height="18.2" viewBox="0 0 23 18.2"><path d="M0.8 3.9L6.6 6.8L11.4 6.8L15.7 3.4L18.6 3.9L23 7.7" fill="none" stroke="#9a9a9a" stroke-width="0.8"/><path d="M0.8 9.7L6.6 15.4L11.4 10.1L15.3 11.6L18.1 14.5L22 11.1" fill="none" stroke="#777" stroke-width="0.8"/><path d="M0.8 12.5L6.6 8.2L10.4 12.5L12.8 11.6L18.1 7.2L22.5 7.7" fill="none" stroke="#222" stroke-width="0.8"/><path d="M0.55 0V17.7H23" fill="none" stroke="#000" stroke-width="1.1"/></svg></div><div class="ico" style="left:661px;top:135.15px"><svg width="15.2" height="17.2" viewBox="0 0 15.2 17.2"><rect x="6" y="0.2" width="3.2" height="2.4" rx="0.8" fill="#555"/><circle cx="7.6" cy="9.9" r="6.8" fill="url(#wg)" stroke="#222" stroke-width="1"/><path d="M7.6 4.4V5.8M7.6 14V15.4M2.1 9.9H3.5M11.7 9.9H13.1" stroke="#555" stroke-width="0.7"/><path d="M5.4 7.3L7.6 9.9L10.4 6.4" fill="none" stroke="#333" stroke-width="0.9"/></svg></div><div class="ico" style="left:687px;top:134.15px"><svg width="15.3" height="18.2" viewBox="0 0 15.3 18.2"><rect x="0.6" y="0.6" width="14.1" height="17" rx="1.6" fill="#e6e6e6" stroke="#444" stroke-width="1"/><rect x="2.8" y="2.8" width="9.8" height="3.4" fill="#dadada" stroke="#555" stroke-width="0.8"/><g fill="#4a4a4a"><rect x="2.9" y="8.6" width="1.8" height="1.9"/><rect x="5.8" y="8.6" width="1.8" height="1.9"/><rect x="8.7" y="8.6" width="1.8" height="1.9"/><rect x="2.9" y="11.5" width="1.8" height="1.9"/><rect x="5.8" y="11.5" width="1.8" height="1.9"/><rect x="8.7" y="11.5" width="1.8" height="1.9"/><rect x="2.9" y="14.4" width="1.8" height="1.9"/><rect x="5.8" y="14.4" width="1.8" height="1.9"/><rect x="8.7" y="14.4" width="1.8" height="1.9"/><rect x="11.6" y="14.4" width="1.6" height="1.9"/></g><rect x="11.6" y="8.6" width="1.6" height="4.6" fill="#777"/></svg></div><div class="ico" style="left:710px;top:135.15px"><svg width="22.2" height="15" viewBox="0 0 22.2 15"><path d="M10.4 0.4L12.6 2.6C17.2 2.4 22 7 22.2 15H10.5L14.6 10.2L11 8.4L6.6 12.4L5.3 11L8.6 4.4Z" fill="#9b9b9b"/><path d="M4.3 0.8L6 3L8.9 3.2L6.9 7.6L1.6 10.4L0.2 8.7L3 4.5Z" fill="#c2c2c2"/><path d="M3.9 15L8.6 10.8L11.2 11.6L9.6 15Z" fill="#c2c2c2"/></svg></div><div class="ico" style="left:735.4px;top:135.15px"><svg width="23.8" height="16.2" viewBox="0 0 23.8 16.2"><ellipse cx="5.1" cy="2.7" rx="2.1" ry="2.7" fill="#cdcdcd"/><path d="M0.4 16V8.8Q0.4 5.9 3 5.9H5.4Q8 5.9 8 8.8V16H4.45V12.5H3.95V16Z" fill="#cdcdcd"/><ellipse cx="11.1" cy="2.7" rx="2.1" ry="2.7" fill="#adadad"/><path d="M6.8 16V8.8Q6.8 5.9 9.4 5.9H12.2Q14.8 5.9 14.8 8.8V16H11.05V12.5H10.55V16Z" fill="#adadad"/><ellipse cx="18.1" cy="2.7" rx="2.1" ry="2.7" fill="#909090"/><path d="M13.4 16V8.8Q13.4 5.9 16 5.9H21.1Q23.7 5.9 23.7 8.8V16H18.8V12.5H18.3V16Z" fill="#909090"/></svg></div><div class="ico" style="left:760.2px;top:133.65px"><svg width="25.8" height="19.3" viewBox="0 0 25.8 19.3"><path d="M1.4 2.2C2.6 0.6 5 0.4 7 0.8C9 1.2 11 0.6 12.8 0.4L11.4 11C9.6 11.4 7.6 10.8 5.8 11.2C4.2 11.5 2.4 12.4 0.4 11.8C0.2 8 0.6 4.6 1.4 2.2Z" fill="url(#ck)" stroke="#444" stroke-width="0.6"/><path d="M1.4 2.2C2.2 1.2 3.4 1.4 3.8 2.4C3 5.4 2.8 8.6 3 11.4C2 12.2 0.8 12.2 0.4 11.8C0.2 8 0.6 4.6 1.4 2.2Z" fill="#fff" stroke="#555" stroke-width="0.6"/><path d="M13 8.6C13 5 13.4 2 14 0.7L21 0.4C21.8 2.6 22.3 5.2 22.5 7.6L25.6 8.6C25.4 9.6 24.6 10 23.6 10C20 9.4 16.5 9.2 13 8.6Z" fill="url(#ht)"/><path d="M16 8.3C19 8.7 22 8.5 22.5 7.6L25.7 8.7C25.3 9.8 24.5 10.1 23.6 10C21 9.6 18.4 9.3 16 8.3Z" fill="#2a2a2a"/><path d="M5.2 16.4C6 13.8 9.5 12.4 12.5 11.6C15 10.6 19.6 11 22 13.2C23.4 14.8 23.2 17 21 18C17 19.6 8.6 19.8 5.8 18.8C5 18.4 4.9 17.2 5.2 16.4Z" fill="#fff" stroke="#2a2a2a" stroke-width="0.8"/><path d="M16.6 11.6C19.6 11.4 21.8 12.8 22.5 14.6C22.9 16.4 22 17.8 20.4 18.3L16.8 14.6Z" fill="#777"/><path d="M7.6 17.4C10 14.8 13.6 14 16.4 13.6M11.4 18.6C14 16.2 17.4 15.2 20.6 15.2M14.4 11.8L17.6 14.6" fill="none" stroke="#444" stroke-width="0.7"/></svg></div><div class="ico" style="left:791px;top:134.15px"><svg width="18.2" height="17.9" viewBox="0 0 18.2 17.9"><circle cx="9.1" cy="8.95" r="8.4" fill="#fcfcfc" stroke="#868686" stroke-width="0.9"/><circle cx="9.1" cy="4.35" r="1.45" fill="#858585"/><path d="M6.4 6.4H10.5V12.1H12.9V13.9H5.7V12.1H7.9V7.8H6.4Z" fill="#858585"/></svg></div><div class="hr" style="top:157.8px"></div></div>
<div class="race" style="top:482.95px;height:163.2px"><div class="ttl"><span class="b" style="left:14.7px;letter-spacing:-0.08px">3.Koşu</span><span style="left:62.4px;letter-spacing:0.24px">Saat: 15:00</span><a style="left:133px;letter-spacing:0.15px">Şartli&nbsp; 5</a><span style="left:175.2px;letter-spacing:0.65px">/DHÖW</span><a style="left:254.3px;letter-spacing:0.17px">5 ve YUKARI ARAPLAR</a><span style="left:435.9px;letter-spacing:0.18px">42.000 TL</span><span class="b grn" style="left:642.5px;letter-spacing:0.07px">1400 Çim</span></div><table class="r" style="left:13.17px;top:13px;width:817.4px"><colgroup><col style="width:14.2px"><col style="width:33.2px"><col style="width:38.8px"><col style="width:29.8px"><col style="width:13.8px"><col style="width:250.9px"><col style="width:34.8px"><col style="width:34.5px"><col style="width:27.2px"><col style="width:97.7px"><col style="width:24.1px"><col style="width:85.1px"><col style="width:46.8px"><col style="width:56.4px"><col style="width:30.1px"></colgroup><tr><th style="padding-left:0.3px"></th><th style="padding-left:0.3px"><div class="cl">Dozaj</div></th><th style="padding-left:0.3px">Bülten</th><th style="padding-left:0.3px">Puan</th><th style="padding-left:0.3px"></th><th style="padding-left:0.3px">&nbsp;At İsmi</th><th style="padding-left:0.3px"></th><th class="ca">Kilo</th><th style="padding-left:0.3px">+ -</th><th style="padding-left:0.3px">Jokey</th><th class="ra" style="padding-right:0.3px"><div class="cl">St</div></th><th class="ra" style="padding-right:0.3px"><div class="cl">Son 10 yarışı</div></th><th class="ra" style="padding-right:0.3px"><div class="cl">5 Çim</div></th><th style="padding-left:0.3px">&nbsp;400m G.</th><th style="padding-left:0.3px">&nbsp;S</th></tr><tr><td class="ic" style="padding-top:0"><svg width="12.5" height="13.6" viewBox="0 0 12.5 13.6"><rect x="3.4" y="7.2" width="1.6" height="3.7" fill="#cfe2fb"/><rect x="5.0" y="3.3" width="1.8" height="7.6" fill="#ee3535"/><rect x="6.9" y="1.8" width="1.8" height="9.1" fill="#3bdc3b"/><rect x="8.8" y="6.9" width="1.7" height="4" fill="#a3a3f6"/><path d="M1.45 1.1V11.3H11.8" fill="none" stroke="#2a1822" stroke-width="1.1"/></svg></td><td class="b red ra" style="padding-right:7.2px"></td><td></td><td class="red ra" style="padding-right:7.9px">179</td><td style="padding-top:0"></td><td class="b" style="padding-left:0.8px;padding-top:2.6px;line-height:11px;letter-spacing:0.12px">&nbsp;1.TOZAN<sup>&nbsp;G</sup></td><td style="padding-left:0.5px">10yke</td><td style="padding-left:0.7px">&nbsp;59</td><td class="nav" style="padding-left:0.6px"><span class="hy">-</span>1</td><td class="b" style="padding-left:0.9px">H.KARATAŞ</td><td class="ra" style="padding-right:0.6px">7 TS</td><td class="ra" style="padding-right:0.6px">5321552155&nbsp;</td><td class="b grn ra" style="padding-right:0.6px">52155&nbsp;</td><td class="b red" style="padding-left:0.7px">&nbsp;27,0 R</td><td></td></tr><tr><td class="ic" style="padding-top:0"><svg width="12.5" height="13.6" viewBox="0 0 12.5 13.6"><rect x="3.4" y="7.2" width="1.6" height="3.7" fill="#cfe2fb"/><rect x="5.0" y="3.3" width="1.8" height="7.6" fill="#ee3535"/><rect x="6.9" y="1.8" width="1.8" height="9.1" fill="#3bdc3b"/><rect x="8.8" y="6.9" width="1.7" height="4" fill="#a3a3f6"/><path d="M1.45 1.1V11.3H11.8" fill="none" stroke="#2a1822" stroke-width="1.1"/></svg></td><td class="b red ra" style="padding-right:7.2px"></td><td></td><td class="red ra" style="padding-right:7.9px">139</td><td style="padding-top:0"></td><td class="b" style="padding-left:0.8px;padding-top:2.6px;line-height:11px;letter-spacing:0.12px">&nbsp;2.ALBURAK KIZI</td><td style="padding-left:0.5px">6yad</td><td style="padding-left:0.7px">&nbsp;57</td><td class="nav" style="padding-left:0.6px"><span class="hy">-</span>2,5</td><td class="b" style="padding-left:0.9px">O.ATMACA</td><td class="ra" style="padding-right:0.6px">1&nbsp;</td><td class="ra" style="padding-right:0.6px">2221224147&nbsp;</td><td class="b grn ra" style="padding-right:0.6px">22417&nbsp;</td><td class="b red" style="padding-left:0.7px">&nbsp;27,7 R</td><td></td></tr><tr><td class="ic" style="padding-top:0"><svg width="12.5" height="13.6" viewBox="0 0 12.5 13.6"><rect x="3.4" y="7.2" width="1.6" height="3.7" fill="#cfe2fb"/><rect x="5.0" y="3.3" width="1.8" height="7.6" fill="#ee3535"/><rect x="6.9" y="1.8" width="1.8" height="9.1" fill="#3bdc3b"/><rect x="8.8" y="6.9" width="1.7" height="4" fill="#a3a3f6"/><path d="M1.45 1.1V11.3H11.8" fill="none" stroke="#2a1822" stroke-width="1.1"/></svg></td><td class="b red ra" style="padding-right:7.2px"></td><td></td><td class="red ra" style="padding-right:7.9px">177</td><td style="padding-top:0"></td><td class="b" style="padding-left:0.8px;padding-top:2.6px;line-height:11px;letter-spacing:0.12px">&nbsp;3.MERKÜROĞLU<sup>&nbsp;G D</sup></td><td style="padding-left:0.5px">5yae</td><td style="padding-left:0.7px">&nbsp;57</td><td class="nav" style="padding-left:0.6px"><span class="hy">-</span>2</td><td class="b" style="padding-left:0.9px">G.KOCAKAYA</td><td class="ra" style="padding-right:0.6px">4&nbsp;</td><td class="ra" style="padding-right:0.6px">0503742322&nbsp;</td><td class="b grn ra" style="padding-right:0.6px">42322&nbsp;</td><td class="b red" style="padding-left:0.7px">&nbsp;28,7 R</td><td></td></tr><tr><td class="ic" style="padding-top:0"><svg width="12.5" height="13.6" viewBox="0 0 12.5 13.6"><rect x="3.4" y="7.2" width="1.6" height="3.7" fill="#cfe2fb"/><rect x="5.0" y="3.3" width="1.8" height="7.6" fill="#ee3535"/><rect x="6.9" y="1.8" width="1.8" height="9.1" fill="#3bdc3b"/><rect x="8.8" y="6.9" width="1.7" height="4" fill="#a3a3f6"/><path d="M1.45 1.1V11.3H11.8" fill="none" stroke="#2a1822" stroke-width="1.1"/></svg></td><td class="b red ra" style="padding-right:7.2px"></td><td></td><td class="red ra" style="padding-right:7.9px">153</td><td style="padding-top:0"></td><td class="b" style="padding-left:0.8px;padding-top:2.6px;line-height:11px;letter-spacing:0.12px">&nbsp;4.SAVAŞ ATI<sup>&nbsp;G</sup></td><td style="padding-left:0.5px">5yke</td><td style="padding-left:0.7px">&nbsp;57</td><td style="padding-left:0.6px"></td><td class="b" style="padding-left:0.9px">AHMET ÇELİK</td><td class="ra" style="padding-right:0.6px">3&nbsp;</td><td class="ra" style="padding-right:0.6px">4357746514&nbsp;</td><td class="b grn ra" style="padding-right:0.6px">73461&nbsp;</td><td class="b red" style="padding-left:0.7px">&nbsp;28,0 R</td><td></td></tr><tr><td class="ic" style="padding-top:0"><svg width="12.5" height="13.6" viewBox="0 0 12.5 13.6"><rect x="3.4" y="7.2" width="1.6" height="3.7" fill="#cfe2fb"/><rect x="5.0" y="3.3" width="1.8" height="7.6" fill="#ee3535"/><rect x="6.9" y="1.8" width="1.8" height="9.1" fill="#3bdc3b"/><rect x="8.8" y="6.9" width="1.7" height="4" fill="#a3a3f6"/><path d="M1.45 1.1V11.3H11.8" fill="none" stroke="#2a1822" stroke-width="1.1"/></svg></td><td class="b red ra" style="padding-right:7.2px"></td><td></td><td class="red ra" style="padding-right:7.9px">136</td><td style="padding-top:0"></td><td class="b" style="padding-left:0.8px;padding-top:2.6px;line-height:11px;letter-spacing:0.12px">&nbsp;5.ALİŞİRİN OĞLU<sup>&nbsp;G</sup></td><td style="padding-left:0.5px">6yke</td><td style="padding-left:0.7px">&nbsp;56</td><td style="padding-left:0.6px"></td><td class="b" style="padding-left:0.9px">M.AKYAVUZ</td><td class="ra" style="padding-right:0.6px">6 TS</td><td class="ra" style="padding-right:0.6px">1709653343&nbsp;</td><td class="b grn ra" style="padding-right:0.6px">53343&nbsp;</td><td class="b red" style="padding-left:0.7px">&nbsp;27,2 R</td><td></td></tr><tr><td class="ic" style="padding-top:0"><svg width="12.5" height="13.6" viewBox="0 0 12.5 13.6"><rect x="3.4" y="7.2" width="1.6" height="3.7" fill="#cfe2fb"/><rect x="5.0" y="3.3" width="1.8" height="7.6" fill="#ee3535"/><rect x="6.9" y="1.8" width="1.8" height="9.1" fill="#3bdc3b"/><rect x="8.8" y="6.9" width="1.7" height="4" fill="#a3a3f6"/><path d="M1.45 1.1V11.3H11.8" fill="none" stroke="#2a1822" stroke-width="1.1"/></svg></td><td class="b red ra" style="padding-right:7.2px"></td><td></td><td class="red ra" style="padding-right:7.9px">113</td><td style="padding-top:0"></td><td class="b" style="padding-left:0.8px;padding-top:2.6px;line-height:11px;letter-spacing:0.12px">&nbsp;6.ARAPKIR<sup>&nbsp;G D</sup></td><td style="padding-left:0.5px">8yke</td><td style="padding-left:0.7px">&nbsp;56</td><td class="red" style="padding-left:0.6px">+3</td><td class="b" style="padding-left:0.9px">DENİZ YILDIZ</td><td class="ra" style="padding-right:0.6px">2&nbsp;</td><td class="ra" style="padding-right:0.6px">8724068253&nbsp;</td><td class="b grn ra" style="padding-right:0.6px">40683&nbsp;</td><td class="b red" style="padding-left:0.7px">&nbsp;28,0 R</td><td></td></tr><tr><td class="ic" style="padding-top:0"><svg width="12.5" height="13.6" viewBox="0 0 12.5 13.6"><rect x="3.4" y="7.2" width="1.6" height="3.7" fill="#cfe2fb"/><rect x="5.0" y="3.3" width="1.8" height="7.6" fill="#ee3535"/><rect x="6.9" y="1.8" width="1.8" height="9.1" fill="#3bdc3b"/><rect x="8.8" y="6.9" width="1.7" height="4" fill="#a3a3f6"/><path d="M1.45 1.1V11.3H11.8" fill="none" stroke="#2a1822" stroke-width="1.1"/></svg></td><td class="b red ra" style="padding-right:7.2px"></td><td></td><td class="red ra" style="padding-right:7.9px">191</td><td style="padding-top:0"></td><td class="b" style="padding-left:0.8px;padding-top:2.6px;line-height:11px;letter-spacing:0.12px">&nbsp;7.BORDALI<sup>&nbsp;G</sup></td><td style="padding-left:0.5px">6yae</td><td style="padding-left:0.7px">&nbsp;55</td><td class="nav" style="padding-left:0.6px"><span class="hy">-</span>1</td><td class="b" style="padding-left:0.9px">A.SÖZEN</td><td class="ra" style="padding-right:0.6px">5&nbsp;</td><td class="ra" style="padding-right:0.6px">7658455541&nbsp;</td><td class="b grn ra" style="padding-right:0.6px">55541&nbsp;</td><td class="b red" style="padding-left:0.7px">&nbsp;28,2 R</td><td></td></tr></table><div class="ft b red" style="top:133.25px"><span style="letter-spacing:0.02px">Yedili Ganyan Başlar</span></div><div class="ft" style="top:145.2px"><span class="n"><span style="letter-spacing:0.11px">Yedili Plase bu koşudan başlar, İkili, Sıralı ikili, Sıralı üçlü bahis, Çifte</span></span></div><div class="ico" style="left:478.5px;top:134.65px"><svg width="16.2" height="16.8" viewBox="0 0 16.2 16.8"><text x="-0.35" y="15.85" font-family="Liberation Sans, sans-serif" font-weight="bold" font-size="21.2" fill="#787878" stroke="#787878" stroke-width="1.6" stroke-linejoin="round" stroke-linecap="round">G</text></svg></div><div class="ico" style="left:504.8px;top:134.15px"><svg width="17.2" height="18" viewBox="0 0 17.2 18"><rect x="8.4" y="0.6" width="8.2" height="16.6" fill="#dcdcdc"/><path d="M8.4 0.7H16.6V17.2H6.5" fill="none" stroke="#333" stroke-width="1.1"/><rect x="9.8" y="2" width="5.2" height="3.6" fill="#f2f2f2" stroke="#555" stroke-width="0.7"/><g fill="#3a3a3a"><rect x="10.4" y="8.4" width="1.8" height="2"/><rect x="13.3" y="8.4" width="1.8" height="2"/><rect x="10.4" y="11.3" width="1.8" height="2"/><rect x="13.3" y="11.3" width="1.8" height="2"/><rect x="10.4" y="14.2" width="1.8" height="2"/><rect x="13.3" y="14.2" width="1.8" height="2"/><rect x="7.8" y="14.8" width="1.4" height="1.4"/></g><path d="M0.5 2C0.5 5.5 3.4 7 4.3 8.7C5.2 7 8.1 5.5 8.1 2ZM0.5 15.2C0.5 12 3.4 10.4 4.3 8.7C5.2 10.4 8.1 12 8.1 15.2Z" fill="#fff" stroke="#444" stroke-width="0.8"/><ellipse cx="4.3" cy="2" rx="3.9" ry="1.4" fill="#e8e8e8" stroke="#666" stroke-width="0.7"/><ellipse cx="4.3" cy="15.3" rx="3.9" ry="1.4" fill="#ddd" stroke="#666" stroke-width="0.7"/><path d="M1.4 13.7L4.3 10.5L7.2 13.7Z" fill="#111"/></svg></div><div class="ico" style="left:529.9px;top:135.35px"><svg width="17.4" height="14.8" viewBox="0 0 17.4 14.8"><path d="M3.4 0.2L5.8 2.6L8.6 2.2L12.4 4.2L9.6 6.5L5 9.7L1.7 11L0.2 8.6L1.9 4.4Z" fill="#979797"/><path d="M12.9 4.9L14.6 7.6C15 10 15.2 12.4 15.1 14.8H2.8L3.6 13.2L6.2 10.4L10.2 7.3Z" fill="#979797"/><path d="M9.4 9.4L15.8 3.2" stroke="#000" stroke-width="2.1" fill="none"/><path d="M12.6 1.9L17.4 1.6L17.1 6.6Z" fill="#000"/></svg></div><div class="ico" style="left:559.8px;top:135.35px"><svg width="9.2" height="17" viewBox="0 0 9.2 17"><text x="-1.5" y="14.3" font-family="DejaVu Sans Light, DejaVu Sans, sans-serif" font-weight="200" font-size="18.8" fill="#8c8c8c">$</text></svg></div><div class="ico" style="left:579.8px;top:134.15px"><svg width="23.2" height="18.4" viewBox="0 0 23.2 18.4"><g transform="rotate(36 6.6 12.1)"><rect x="-0.6" y="9.1" width="14.4" height="6" rx="1.6" fill="#a6a6a6"/><rect x="2.4" y="9.1" width="2.2" height="6" fill="#d4d4d4"/><rect x="6.4" y="9.1" width="1.6" height="6" fill="#7a7a7a"/><ellipse cx="12.6" cy="12.1" rx="1.9" ry="2.9" fill="#e4e4e4" stroke="#8a8a8a" stroke-width="0.6"/></g><g transform="rotate(36 16.6 5.6)"><rect x="9.4" y="2.7" width="14.4" height="5.8" rx="1.6" fill="#a6a6a6"/><rect x="12.4" y="2.7" width="2.2" height="5.8" fill="#d4d4d4"/><rect x="16.4" y="2.7" width="1.6" height="5.8" fill="#7a7a7a"/><ellipse cx="22.6" cy="5.6" rx="1.9" ry="2.8" fill="#e4e4e4" stroke="#8a8a8a" stroke-width="0.6"/></g><path d="M8.5 7.5L12.5 10.5" stroke="#777" stroke-width="2.6"/></svg></div><div class="ico" style="left:612.2px;top:134.65px"><svg width="10.9" height="17.4" viewBox="0 0 10.9 17.4"><path d="M0.6 2.2C0.6 6 4.5 7 5.45 8.7C6.4 7 10.3 6 10.3 2.2M0.6 15.2C0.6 11.4 4.5 10.4 5.45 8.7C6.4 10.4 10.3 11.4 10.3 15.2" fill="#fff" stroke="#4a4a4a" stroke-width="0.8"/><ellipse cx="5.45" cy="2" rx="4.9" ry="1.6" fill="#e6e6e6" stroke="#777" stroke-width="0.8"/><path d="M2 14.4C3.5 12.6 7.4 12.6 8.9 14.4Z" fill="#777"/><ellipse cx="5.45" cy="15.5" rx="4.9" ry="1.6" fill="#bdbdbd" stroke="#777" stroke-width="0.8"/></svg></div><div class="ico" style="left:631.2px;top:134.15px"><svg width="23" height="18.2" viewBox="0 0 23 18.2"><path d="M0.8 3.9L6.6 6.8L11.4 6.8L15.7 3.4L18.6 3.9L23 7.7" fill="none" stroke="#9a9a9a" stroke-width="0.8"/><path d="M0.8 9.7L6.6 15.4L11.4 10.1L15.3 11.6L18.1 14.5L22 11.1" fill="none" stroke="#777" stroke-width="0.8"/><path d="M0.8 12.5L6.6 8.2L10.4 12.5L12.8 11.6L18.1 7.2L22.5 7.7" fill="none" stroke="#222" stroke-width="0.8"/><path d="M0.55 0V17.7H23" fill="none" stroke="#000" stroke-width="1.1"/></svg></div><div class="ico" style="left:661px;top:135.15px"><svg width="15.2" height="17.2" viewBox="0 0 15.2 17.2"><rect x="6" y="0.2" width="3.2" height="2.4" rx="0.8" fill="#555"/><circle cx="7.6" cy="9.9" r="6.8" fill="url(#wg)" stroke="#222" stroke-width="1"/><path d="M7.6 4.4V5.8M7.6 14V15.4M2.1 9.9H3.5M11.7 9.9H13.1" stroke="#555" stroke-width="0.7"/><path d="M5.4 7.3L7.6 9.9L10.4 6.4" fill="none" stroke="#333" stroke-width="0.9"/></svg></div><div class="ico" style="left:687px;top:134.15px"><svg width="15.3" height="18.2" viewBox="0 0 15.3 18.2"><rect x="0.6" y="0.6" width="14.1" height="17" rx="1.6" fill="#e6e6e6" stroke="#444" stroke-width="1"/><rect x="2.8" y="2.8" width="9.8" height="3.4" fill="#dadada" stroke="#555" stroke-width="0.8"/><g fill="#4a4a4a"><rect x="2.9" y="8.6" width="1.8" height="1.9"/><rect x="5.8" y="8.6" width="1.8" height="1.9"/><rect x="8.7" y="8.6" width="1.8" height="1.9"/><rect x="2.9" y="11.5" width="1.8" height="1.9"/><rect x="5.8" y="11.5" width="1.8" height="1.9"/><rect x="8.7" y="11.5" width="1.8" height="1.9"/><rect x="2.9" y="14.4" width="1.8" height="1.9"/><rect x="5.8" y="14.4" width="1.8" height="1.9"/><rect x="8.7" y="14.4" width="1.8" height="1.9"/><rect x="11.6" y="14.4" width="1.6" height="1.9"/></g><rect x="11.6" y="8.6" width="1.6" height="4.6" fill="#777"/></svg></div><div class="ico" style="left:710px;top:135.15px"><svg width="22.2" height="15" viewBox="0 0 22.2 15"><path d="M10.4 0.4L12.6 2.6C17.2 2.4 22 7 22.2 15H10.5L14.6 10.2L11 8.4L6.6 12.4L5.3 11L8.6 4.4Z" fill="#9b9b9b"/><path d="M4.3 0.8L6 3L8.9 3.2L6.9 7.6L1.6 10.4L0.2 8.7L3 4.5Z" fill="#c2c2c2"/><path d="M3.9 15L8.6 10.8L11.2 11.6L9.6 15Z" fill="#c2c2c2"/></svg></div><div class="ico" style="left:735.4px;top:135.15px"><svg width="23.8" height="16.2" viewBox="0 0 23.8 16.2"><ellipse cx="5.1" cy="2.7" rx="2.1" ry="2.7" fill="#cdcdcd"/><path d="M0.4 16V8.8Q0.4 5.9 3 5.9H5.4Q8 5.9 8 8.8V16H4.45V12.5H3.95V16Z" fill="#cdcdcd"/><ellipse cx="11.1" cy="2.7" rx="2.1" ry="2.7" fill="#adadad"/><path d="M6.8 16V8.8Q6.8 5.9 9.4 5.9H12.2Q14.8 5.9 14.8 8.8V16H11.05V12.5H10.55V16Z" fill="#adadad"/><ellipse cx="18.1" cy="2.7" rx="2.1" ry="2.7" fill="#909090"/><path d="M13.4 16V8.8Q13.4 5.9 16 5.9H21.1Q23.7 5.9 23.7 8.8V16H18.8V12.5H18.3V16Z" fill="#909090"/></svg></div><div class="ico" style="left:760.2px;top:133.65px"><svg width="25.8" height="19.3" viewBox="0 0 25.8 19.3"><path d="M1.4 2.2C2.6 0.6 5 0.4 7 0.8C9 1.2 11 0.6 12.8 0.4L11.4 11C9.6 11.4 7.6 10.8 5.8 11.2C4.2 11.5 2.4 12.4 0.4 11.8C0.2 8 0.6 4.6 1.4 2.2Z" fill="url(#ck)" stroke="#444" stroke-width="0.6"/><path d="M1.4 2.2C2.2 1.2 3.4 1.4 3.8 2.4C3 5.4 2.8 8.6 3 11.4C2 12.2 0.8 12.2 0.4 11.8C0.2 8 0.6 4.6 1.4 2.2Z" fill="#fff" stroke="#555" stroke-width="0.6"/><path d="M13 8.6C13 5 13.4 2 14 0.7L21 0.4C21.8 2.6 22.3 5.2 22.5 7.6L25.6 8.6C25.4 9.6 24.6 10 23.6 10C20 9.4 16.5 9.2 13 8.6Z" fill="url(#ht)"/><path d="M16 8.3C19 8.7 22 8.5 22.5 7.6L25.7 8.7C25.3 9.8 24.5 10.1 23.6 10C21 9.6 18.4 9.3 16 8.3Z" fill="#2a2a2a"/><path d="M5.2 16.4C6 13.8 9.5 12.4 12.5 11.6C15 10.6 19.6 11 22 13.2C23.4 14.8 23.2 17 21 18C17 19.6 8.6 19.8 5.8 18.8C5 18.4 4.9 17.2 5.2 16.4Z" fill="#fff" stroke="#2a2a2a" stroke-width="0.8"/><path d="M16.6 11.6C19.6 11.4 21.8 12.8 22.5 14.6C22.9 16.4 22 17.8 20.4 18.3L16.8 14.6Z" fill="#777"/><path d="M7.6 17.4C10 14.8 13.6 14 16.4 13.6M11.4 18.6C14 16.2 17.4 15.2 20.6 15.2M14.4 11.8L17.6 14.6" fill="none" stroke="#444" stroke-width="0.7"/></svg></div><div class="ico" style="left:791px;top:134.15px"><svg width="18.2" height="17.9" viewBox="0 0 18.2 17.9"><circle cx="9.1" cy="8.95" r="8.4" fill="#fcfcfc" stroke="#868686" stroke-width="0.9"/><circle cx="9.1" cy="4.35" r="1.45" fill="#858585"/><path d="M6.4 6.4H10.5V12.1H12.9V13.9H5.7V12.1H7.9V7.8H6.4Z" fill="#858585"/></svg></div><div class="hr" style="top:157.8px"></div></div>
<div id="mask"></div>
</div></body></html>
